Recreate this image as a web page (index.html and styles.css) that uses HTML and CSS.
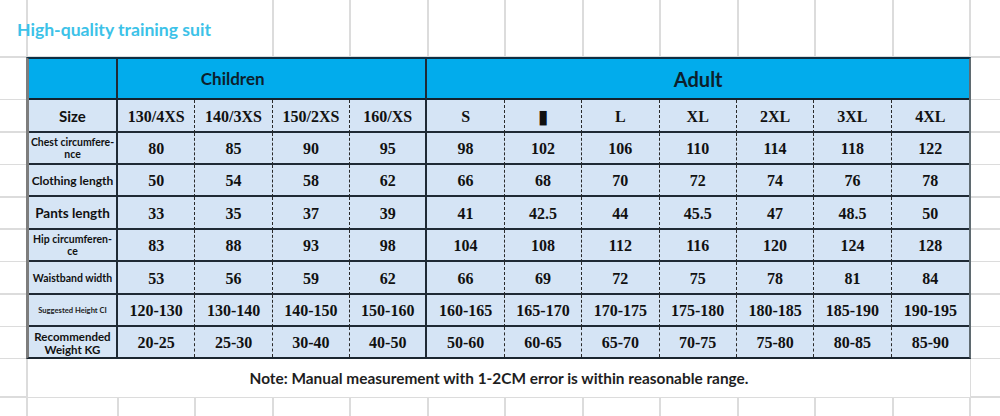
FILE: index.html
```html
<!DOCTYPE html>
<html lang="en">
<head>
<meta charset="utf-8">
<title>Size chart</title>
<link rel="stylesheet" href="styles.css">
</head>
<body>
<div class="sheet">
  <div class="title-row">
    <div class="title-cell"><h1 class="title">High-quality training suit</h1></div>
  </div>
  <table class="chart">
    <colgroup><col class="c-label"><col span="11" class="c-size"></colgroup>
    <thead>
      <tr class="r-group">
        <th class="corner"></th>
        <th colspan="4" class="grp grp-children">Children</th>
        <th colspan="7" class="grp grp-adult">Adult</th>
      </tr>
    </thead>
    <tbody>
      <tr class="r33">
        <th class="lbl lbl-size">Size</th>
        <td>130/4XS</td><td>140/3XS</td><td>150/2XS</td><td>160/XS</td>
        <td>S</td><td><span class="glyph">▮</span></td><td>L</td><td>XL</td><td>2XL</td><td>3XL</td><td>4XL</td>
      </tr>
      <tr class="r32">
        <th class="lbl lbl-small">Chest circumfere-<br>nce</th>
        <td>80</td><td>85</td><td>90</td><td>95</td>
        <td>98</td><td>102</td><td>106</td><td>110</td><td>114</td><td>118</td><td>122</td>
      </tr>
      <tr class="r32">
        <th class="lbl lbl-cloth">Clothing length</th>
        <td>50</td><td>54</td><td>58</td><td>62</td>
        <td>66</td><td>68</td><td>70</td><td>72</td><td>74</td><td>76</td><td>78</td>
      </tr>
      <tr class="r33">
        <th class="lbl lbl-pants">Pants length</th>
        <td>33</td><td>35</td><td>37</td><td>39</td>
        <td>41</td><td>42.5</td><td>44</td><td>45.5</td><td>47</td><td>48.5</td><td>50</td>
      </tr>
      <tr class="r32">
        <th class="lbl lbl-small">Hip circumferen-<br>ce</th>
        <td>83</td><td>88</td><td>93</td><td>98</td>
        <td>104</td><td>108</td><td>112</td><td>116</td><td>120</td><td>124</td><td>128</td>
      </tr>
      <tr class="r33">
        <th class="lbl lbl-waist">Waistband width</th>
        <td>53</td><td>56</td><td>59</td><td>62</td>
        <td>66</td><td>69</td><td>72</td><td>75</td><td>78</td><td>81</td><td>84</td>
      </tr>
      <tr class="r32">
        <th class="lbl lbl-tiny">Suggested Height CI</th>
        <td>120-130</td><td>130-140</td><td>140-150</td><td>150-160</td>
        <td>160-165</td><td>165-170</td><td>170-175</td><td>175-180</td><td>180-185</td><td>185-190</td><td>190-195</td>
      </tr>
      <tr class="r30 last">
        <th class="lbl lbl-weight">Recommended<br>Weight KG</th>
        <td>20-25</td><td>25-30</td><td>30-40</td><td>40-50</td>
        <td>50-60</td><td>60-65</td><td>65-70</td><td>70-75</td><td>75-80</td><td>80-85</td><td>85-90</td>
      </tr>
    </tbody>
  </table>
  <div class="note-row">
    <p class="note">Note: Manual measurement with 1-2CM error is within reasonable range.</p>
  </div>
</div>
</body>
</html>
```
FILE: styles.css
```css
* { box-sizing: border-box; }

html, body {
  margin: 0;
  padding: 0;
  background: #fff;
}

.sheet {
  --grid: #dcdcdc;
  width: 1000px;
  height: 416px;
  overflow: hidden;
  font-family: Lato, "Open Sans", sans-serif;
  background-color: #fff;
  background-image:
    linear-gradient(90deg, transparent 26px, var(--grid) 26px, var(--grid) 28px, transparent 28px),
    repeating-linear-gradient(90deg, var(--grid) 0, var(--grid) 1.5px, transparent 1.5px, transparent 77.5px),
    linear-gradient(180deg, transparent 56px, var(--grid) 56px, var(--grid) 58px, transparent 58px, transparent 396px, var(--grid) 396px, var(--grid) 398px, transparent 398px),
    repeating-linear-gradient(180deg, var(--grid) 0, var(--grid) 1.5px, transparent 1.5px, transparent 32.375px);
  background-size: 100% 100%, 855px 100%, 100% 100%, 100% 261px;
  background-position: 0 0, 117px 0, 0 0, 0 99px;
  background-repeat: no-repeat;
}

/* title */
.title-row {
  height: 57px;
  display: flex;
}

.title-cell {
  margin-left: 28px;
  width: 244px;
  height: 56px;
  background: #fff;
  display: flex;
  align-items: center;
  padding-top: 2px;
}

.title {
  margin: 0 0 0 -11px;
  font-size: 17.6px;
  font-weight: 700;
  color: #3cc2e8;
  white-space: nowrap;
}

/* chart */
.chart {
  margin-left: 26px;
  width: 945px;
  table-layout: fixed;
  border-collapse: separate;
  border-spacing: 0;
  border-top: 2px solid #0d2f44;
  border-left: 3px solid #7d7d7d;
  border-right: 2px solid #5f6a70;
  border-bottom: 2px solid #1b2630;
  background: #d5e4f5;
}

.c-label { width: 89px; }

.chart th,
.chart td {
  padding: 0;
  text-align: center;
  vertical-align: middle;
  color: #111;
  border-right: 1px dashed #2a2a2a;
  border-bottom: 2px solid #1f2a35;
  overflow: visible;
  white-space: nowrap;
}

.chart td {
  padding-top: 2px;
  font-family: "Liberation Serif", "DejaVu Serif", serif;
  font-weight: 700;
  font-size: 16px;
}

.chart td:nth-child(5) { border-right: 2px solid #1f2a35; }
.chart td:last-child { border-right: none; }
.chart .last td,
.chart .last th { border-bottom: none; }

.r-group { height: 41px; }
.r33 { height: 33px; }
.r32 { height: 32px; }
.r30 { height: 30px; }

.r-group th {
  background: #02acec;
  border-right: 2px solid #1f2a35;
  border-bottom: 2px solid #13222e;
  color: #0c1f2c;
  font-weight: 700;
}

.r-group th:last-child { border-right: none; }

.grp-children {
  font-size: 17px;
  padding-right: 78px !important;
}

.grp-adult {
  font-size: 20px;
}

.lbl {
  font-weight: 700;
  border-right: 2px solid #1f2a35 !important;
  background: #d6e5f5;
}

.lbl-size { font-size: 15px; }
.lbl-small { font-size: 10.5px; line-height: 12px; }
.lbl-cloth { font-size: 12px; }
.lbl-pants { font-size: 13.5px; }
.lbl-waist { font-size: 10.5px; }
.lbl-tiny { font-size: 7.6px; font-weight: 700; color: #222 !important; }
.lbl-weight { font-size: 11.5px; line-height: 13px; padding-top: 2px !important; }

.glyph {
  font-family: "DejaVu Sans", sans-serif;
  font-size: 19px;
  line-height: 1;
}

/* note */
.note-row {
  margin-left: 28px;
  width: 942px;
  height: 38px;
  background: #fff;
  display: flex;
  align-items: center;
  justify-content: center;
}

.note {
  margin: 0;
  font-size: 15.4px;
  font-weight: 700;
  color: #1e1e1e;
  white-space: nowrap;
}
```
